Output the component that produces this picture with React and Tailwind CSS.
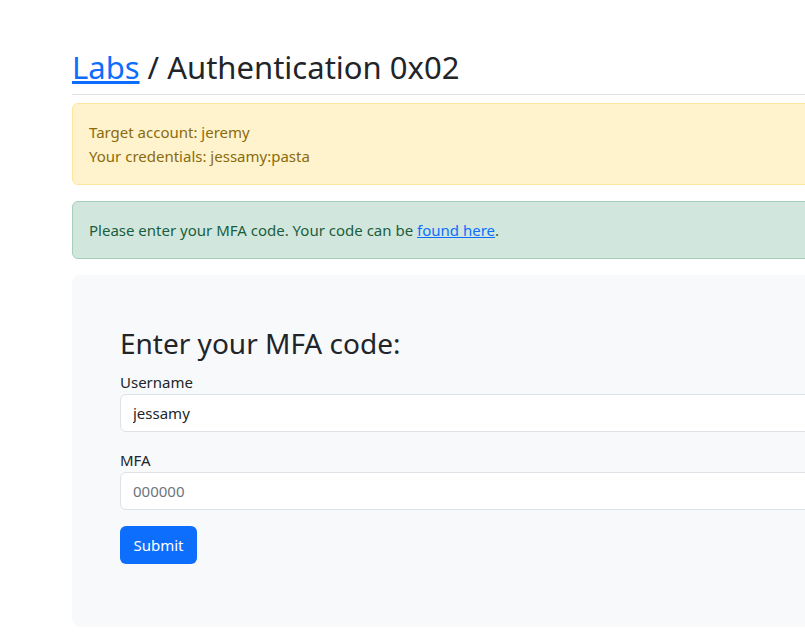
export default function App() {
  return (
    <div className="w-[805px] h-[635px] overflow-hidden bg-white font-['Noto_Sans',sans-serif] text-[15px] text-[#212529]">
      <div className="ml-[72px] w-[820px] pt-[49px]">
        <h1 className="text-[31px] leading-[37px] mb-[8px]">
          <a href="#" className="text-[#0d6efd] underline">Labs</a> / Authentication 0x02
        </h1>
        <hr className="border-0 border-t border-[#dee2e6] mb-[8px]" />

        <div className="mb-[16px] rounded-md border border-[#ffe69c] bg-[#fff3cd] p-[16px] leading-[24px] text-[#8a6b0c]">
          Target account: jeremy
          <br />
          Your credentials: jessamy:pasta
        </div>

        <div className="mb-[16px] rounded-md border border-[#a3cfbb] bg-[#d1e7dd] p-[16px] leading-[24px] text-[#1a5e3d]">
          Please enter your MFA code. Your code can be{' '}
          <a href="#" className="text-[#0d6efd] underline">found here</a>.
        </div>

        <div className="rounded-lg bg-[#f8f9fa] px-[48px] pt-[48px] pb-[63px]">
          <h3 className="text-[28px] leading-[34px] mt-[3px] mb-[10px]">Enter your MFA code:</h3>
          <form>
            <div className="mb-[16px]">
              <label className="block leading-[24px]">Username</label>
              <input
                type="text"
                defaultValue="jessamy"
                className="block w-full h-[38px] rounded-md border border-[#dee2e6] bg-white px-[12px] text-[#212529] outline-none"
              />
            </div>
            <div className="mb-[16px]">
              <label className="block leading-[24px]">MFA</label>
              <input
                type="text"
                placeholder="000000"
                className="block w-full h-[38px] rounded-md border border-[#dee2e6] bg-white px-[12px] text-[#212529] placeholder:text-[#6c757d] outline-none"
              />
            </div>
            <button type="button" className="h-[38px] w-[77px] rounded-md bg-[#0d6efd] text-white">
              Submit
            </button>
          </form>
        </div>
      </div>
    </div>
  );
}
